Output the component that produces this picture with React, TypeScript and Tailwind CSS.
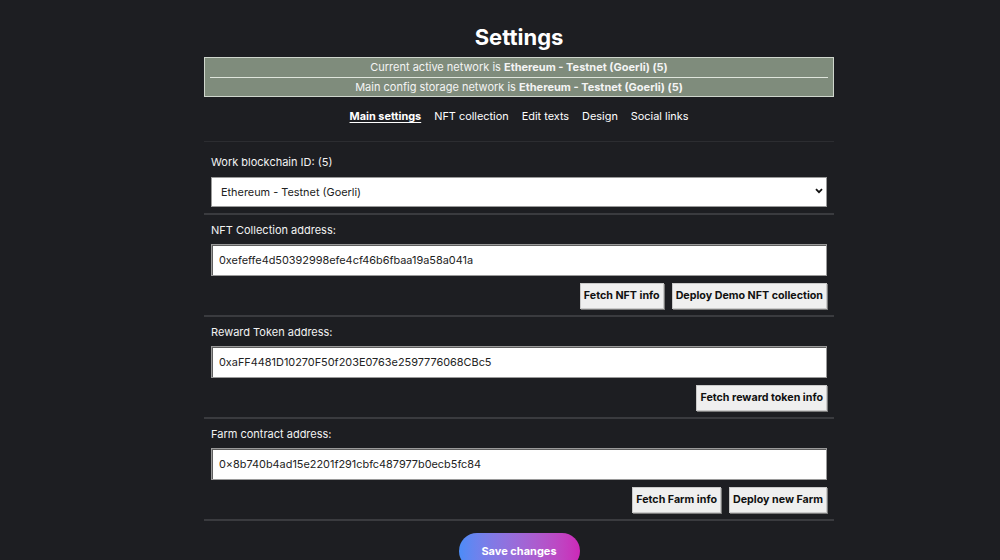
import React from "react";

const font = { fontFamily: "Inter, 'Noto Sans', sans-serif" };

function Field({
  label,
  value,
  buttons,
}: {
  label: string;
  value: string;
  buttons: string[];
}) {
  return (
    <div className="px-[7px] pt-[8px] pb-[6px] border-b-2 border-[#3a3b3f]">
      <div className="text-[11px] leading-[15px] text-[#f2f2f2]">{label}</div>
      <input
        readOnly
        value={value}
        className="mt-[6px] block w-full h-[32px] bg-white border border-[#9a9a9a] shadow-[inset_1px_1px_0_#5f5f5f] px-[7px] text-[10.9px] text-[#222] outline-none"
        style={font}
      />
      <div className="flex justify-end gap-[8px] mt-[7px]">
        {buttons.map((b) => (
          <button
            key={b}
            className="h-[26px] px-[3px] bg-[#efefef] border border-[#c9c9c9] shadow-[1px_1px_0_#7a7a7a] text-[10.7px] font-bold text-[#111]"
          >
            {b}
          </button>
        ))}
      </div>
    </div>
  );
}

export default function App() {
  return (
    <div className="min-h-[560px] bg-[#1d1e22] text-white" style={font}>
      <div className="w-[630px] ml-[204px] pt-[21px]">
        <h1 className="text-center text-[22px] leading-[32px] font-bold">Settings</h1>
        <div className="mt-[4px] bg-[#7f8c7c] border border-[#cfd6cd] text-center text-[11px] text-[#f4f4f4]">
          <div className="leading-[19px] h-[19px]">
            Current active network is <b>Ethereum - Testnet (Goerli) (5)</b>
          </div>
          <div className="mx-[5px] h-[1px] bg-[#dfe5dc]" />
          <div className="leading-[19px] h-[18px]">
            Main config storage network is <b>Ethereum - Testnet (Goerli) (5)</b>
          </div>
        </div>
        <div className="flex justify-center gap-[13px] mt-[10px] text-[10.9px] leading-[18px]">
          <span className="font-bold underline underline-offset-2">Main settings</span>
          <span>NFT collection</span>
          <span>Edit texts</span>
          <span>Design</span>
          <span>Social links</span>
        </div>
        <div className="mt-[16px] h-[1px] bg-[#2c2d31]" />
        <div className="px-[7px] pt-[13px] pb-[6px] border-b-2 border-[#3a3b3f]">
          <div className="text-[11px] leading-[15px] text-[#f2f2f2]">Work blockchain ID: (5)</div>
          <div className="relative mt-[7px]">
            <select
              className="appearance-none block w-full h-[30px] bg-white border border-[#9a9a9a] pl-[9px] pr-[20px] text-[10.9px] text-[#222] outline-none"
              style={font}
              defaultValue="5"
            >
              <option value="5">Ethereum - Testnet (Goerli)</option>
            </select>
            <svg
              className="absolute right-[4px] top-[11px] pointer-events-none"
              width="8"
              height="6"
              viewBox="0 0 8 6"
            >
              <path d="M1 1.2 L4 4.2 L7 1.2" stroke="#111" strokeWidth="1.8" fill="none" />
            </svg>
          </div>
        </div>
        <Field
          label="NFT Collection address:"
          value="0xefeffe4d50392998efe4cf46b6fbaa19a58a041a"
          buttons={["Fetch NFT info", "Deploy Demo NFT collection"]}
        />
        <Field
          label="Reward Token address:"
          value="0xaFF4481D10270F50f203E0763e2597776068CBc5"
          buttons={["Fetch reward token info"]}
        />
        <Field
          label="Farm contract address:"
          value="0×8b740b4ad15e2201f291cbfc487977b0ecb5fc84"
          buttons={["Fetch Farm info", "Deploy new Farm"]}
        />
        <div className="flex justify-center mt-[12px]">
          <button className="h-[36px] w-[121px] rounded-full bg-gradient-to-r from-[#4b8cf7] to-[#cc27b8] text-[11px] font-bold text-white">
            Save changes
          </button>
        </div>
      </div>
    </div>
  );
}
